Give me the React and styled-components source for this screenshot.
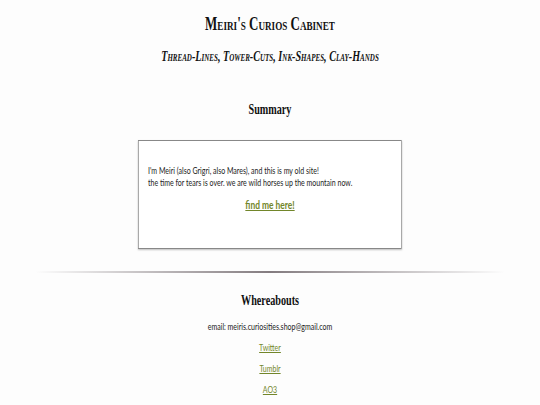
import React from "react";
import styled, { createGlobalStyle } from "styled-components";

const Global = createGlobalStyle`
  html, body { margin: 0; padding: 0; background: #fdfdfd; overflow: hidden; }
  body { font-family: "Lato", sans-serif; color: #222; }
`;

const Page = styled.div`
  width: 770px;
  transform: scaleX(0.7013);
  transform-origin: 0 0;
  display: flex;
  flex-direction: column;
  align-items: center;
  padding-top: 14px;
`;

const Title = styled.h1`
  margin: 0;
  font-family: "Liberation Serif", serif;
  font-variant: small-caps;
  font-weight: bold;
  font-size: 18.5px;
  color: #111;
`;

const Subtitle = styled.h2`
  margin: 13px 0 0;
  font-family: "Liberation Serif", serif;
  font-variant: small-caps;
  font-style: italic;
  font-weight: bold;
  font-size: 14.5px;
  color: #111;
`;

const Heading = styled.h3`
  margin: ${(p) => p.$top}px 0 0;
  font-family: "Liberation Serif", serif;
  font-weight: bold;
  font-size: 14.5px;
  color: #111;
`;

const Box = styled.section`
  box-sizing: border-box;
  width: 376px;
  height: 109px;
  margin-top: 22px;
  border: 1px solid #888;
  box-shadow: 0 1px 2px rgba(0, 0, 0, 0.25);
  background: #fff;
  padding: 23px 13px 0;
  font-size: 10px;
  line-height: 12px;
  color: #222;
`;

const Para = styled.p`
  margin: 0;
`;

const Center = styled.div`
  text-align: center;
  margin-top: ${(p) => p.$top}px;
`;

const Link = styled.a`
  color: #72862a;
  text-decoration: underline;
  font-size: ${(p) => p.$size}px;
  font-weight: ${(p) => (p.$bold ? "bold" : "normal")};
`;

const Rule = styled.hr`
  width: 670px;
  height: 2px;
  border: 0;
  margin: 22px 0 0;
  background: linear-gradient(to right, rgba(0,0,0,0), rgba(90, 80, 85, 0.75), rgba(0,0,0,0));
`;

const Contact = styled.div`
  margin-top: 11px;
  font-size: 10px;
  color: #222;
`;

const LinkList = styled.div`
  display: flex;
  flex-direction: column;
  align-items: center;
  gap: 9px;
  margin-top: 9px;
`;

export default function App() {
  return (
    <>
      <Global />
      <Page>
        <Title>Meiri's Curios Cabinet</Title>
        <Subtitle>Thread-Lines, Tower-Cuts, Ink-Shapes, Clay-Hands</Subtitle>
        <Heading $top={36}>Summary</Heading>
        <Box>
          <Para>I'm Meiri (also Grigri, also Mares), and this is my old site!</Para>
          <Para>the time for tears is over. we are wild horses up the mountain now.</Para>
          <Center $top={11}>
            <Link href="#" $size={12} $bold>find me here!</Link>
          </Center>
        </Box>
        <Rule />
        <Heading $top={19}>Whereabouts</Heading>
        <Contact>email: meiris.curiosities.shop@gmail.com</Contact>
        <LinkList>
          <Link href="#" $size={10}>Twitter</Link>
          <Link href="#" $size={10}>Tumblr</Link>
          <Link href="#" $size={10}>AO3</Link>
        </LinkList>
      </Page>
    </>
  );
}
